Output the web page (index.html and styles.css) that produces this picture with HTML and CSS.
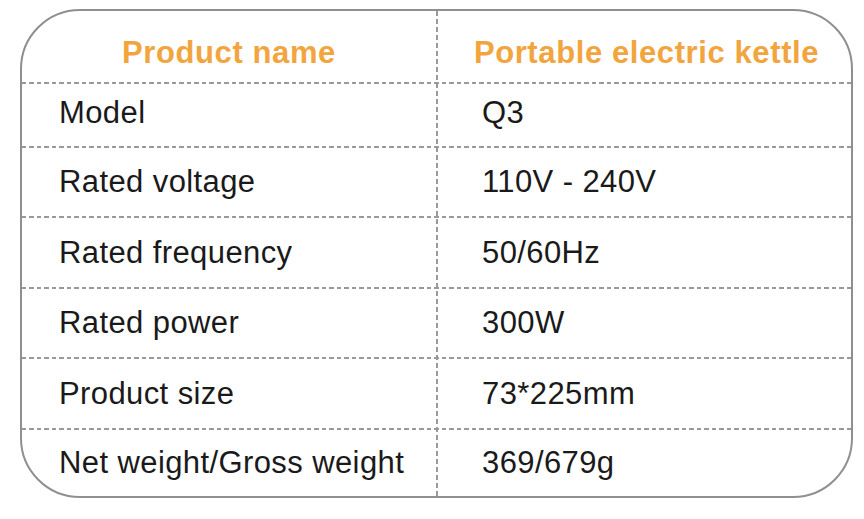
FILE: index.html
```html
<!DOCTYPE html>
<html lang="en">
<head>
<meta charset="utf-8">
<title>Specifications</title>
<link rel="stylesheet" href="styles.css">
</head>
<body>
<div class="sheet">
  <div class="row row-head">
    <div class="cell head">Product name</div>
    <div class="cell head">Portable electric kettle</div>
  </div>
  <div class="row row-model">
    <div class="cell key">Model</div>
    <div class="cell val">Q3</div>
  </div>
  <div class="row">
    <div class="cell key">Rated voltage</div>
    <div class="cell val">110V - 240V</div>
  </div>
  <div class="row row-tall">
    <div class="cell key">Rated frequency</div>
    <div class="cell val">50/60Hz</div>
  </div>
  <div class="row">
    <div class="cell key">Rated power</div>
    <div class="cell val">300W</div>
  </div>
  <div class="row row-tall">
    <div class="cell key">Product size</div>
    <div class="cell val">73*225mm</div>
  </div>
  <div class="row row-last">
    <div class="cell key">Net weight/Gross weight</div>
    <div class="cell val">369/679g</div>
  </div>
</div>
</body>
</html>
```

FILE: styles.css
```css
* { box-sizing: border-box; }
html, body { margin: 0; padding: 0; background: #ffffff; }
body {
  font-family: "Liberation Sans", Arial, sans-serif;
  width: 864px;
  height: 519px;
  overflow: hidden;
}
.sheet {
  margin: 9px 0 0 20px;
  width: 833px;
  border: 2px solid #8f8f8f;
  border-radius: 60px;
  overflow: hidden;
  background-image: repeating-linear-gradient(to bottom, #999999 0 5px, transparent 5px 8px);
  background-size: 2px 100%;
  background-position: 414px 0;
  background-repeat: no-repeat;
}
.row {
  display: grid;
  grid-template-columns: 414px 1fr;
  height: 70px;
  padding-top: 18px;
  background-image: repeating-linear-gradient(to right, #999999 0 4.5px, transparent 4.5px 7.5px);
  background-size: 100% 2px;
  background-position: 0 0;
  background-repeat: no-repeat;
}
.row-head {
  height: 71px;
  padding-top: 24px;
  background-image: none;
}
.row-model { height: 64px; padding-top: 13px; }
.row-tall { height: 71px; padding-top: 19px; }
.row-last { height: 68px; padding-top: 17px; }
.cell {
  font-size: 31px;
  line-height: 35px;
  letter-spacing: 0.4px;
  color: #1a1a1a;
  white-space: nowrap;
}
.head {
  font-weight: bold;
  color: #f2a53e;
  text-align: center;
  letter-spacing: 0.6px;
}
.key { padding-left: 37px; }
.val { padding-left: 46px; }
.row-head .head:last-child { padding-left: 6px; }
```
